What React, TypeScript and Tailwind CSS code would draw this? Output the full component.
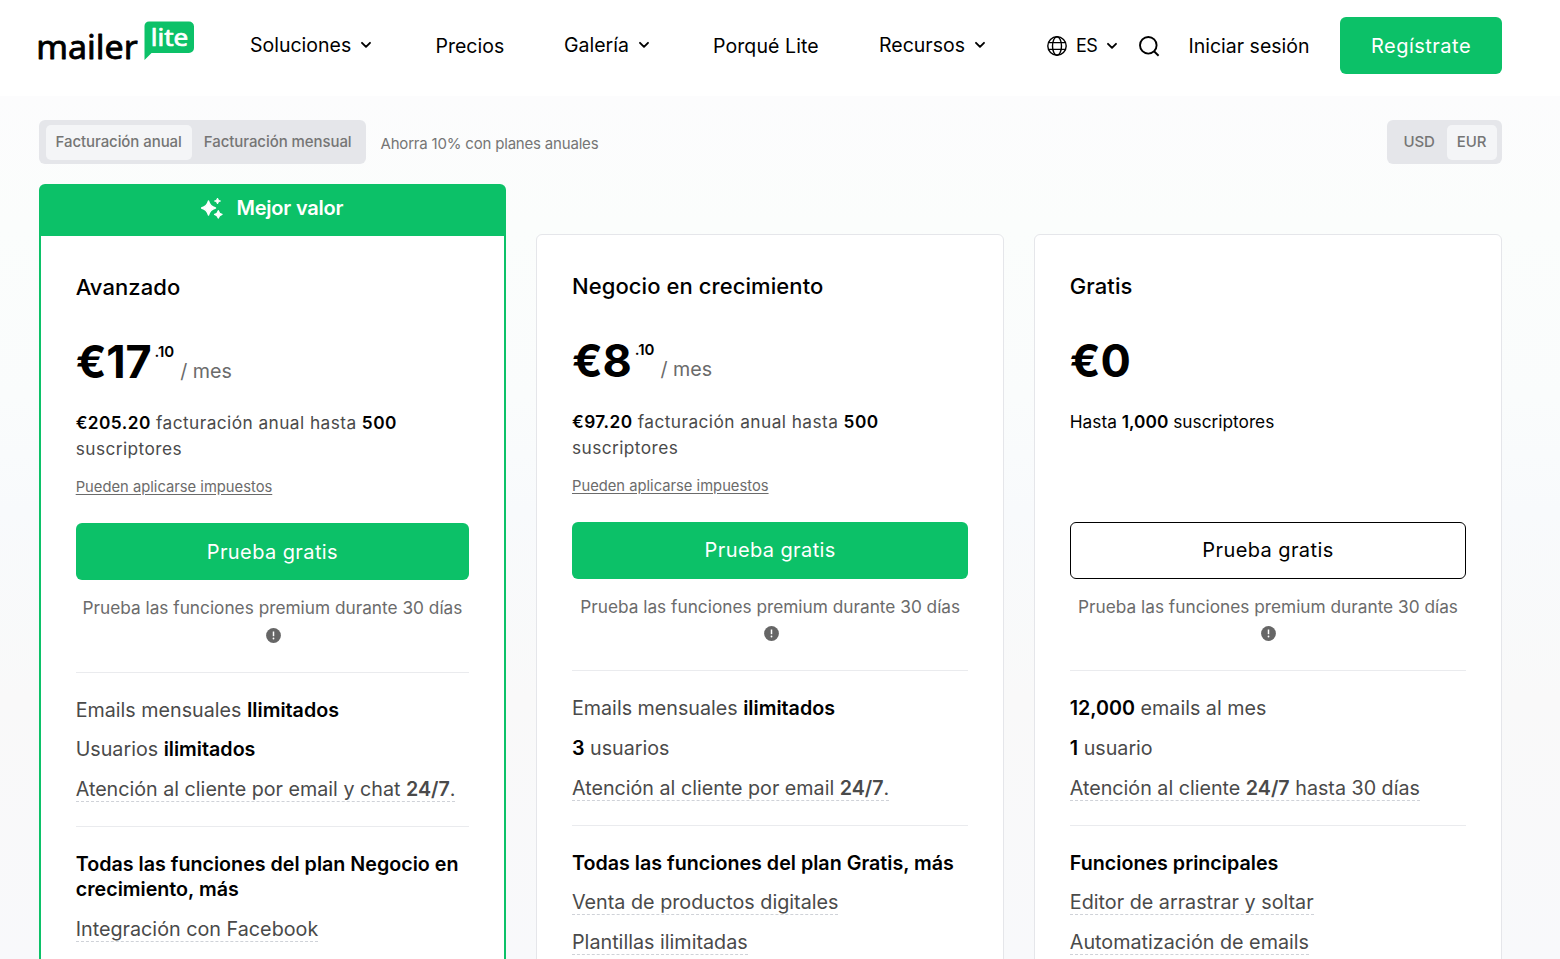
import type { ReactNode } from "react";
import clsx from "clsx";

function Logo() {
  return (
    <svg width="156" height="44" viewBox="0 0 156 44" className="block shrink-0 overflow-visible" role="img" aria-label="MailerLite">
      <path
        d="M111 0.500h40a5 5 0 0 1 5 5V27a5 5 0 0 1-5 5h-37.500L106.500 39V5a4.500 4.500 0 0 1 4.500-4.500z"
        fill="#0cc168"
      />
      <text
        x="-1.800"
        y="38.400"
        textLength="101.500"
        lengthAdjust="spacingAndGlyphs"
        fontFamily="'Noto Sans', sans-serif"
        fontSize="32"
        fontWeight="400"
        fill="#000"
        stroke="#000"
        strokeWidth="0.800"
        strokeLinejoin="round"
      >
        mailer
      </text>
      <text
        x="112.800"
        y="25"
        textLength="37.500"
        lengthAdjust="spacingAndGlyphs"
        fontFamily="'Noto Sans', sans-serif"
        fontSize="23"
        fontWeight="400"
        fill="#fff"
        stroke="#fff"
        strokeWidth="0.700"
        strokeLinejoin="round"
      >
        lite
      </text>
    </svg>
  );
}

function Chevron({ className }: { className?: string }) {
  return (
    <svg width="12" height="8" viewBox="0 0 12 8" fill="none" className={clsx("shrink-0", className)}>
      <path d="M2 1.800 6 5.800 10 1.800" stroke="#000" strokeWidth="1.900" strokeLinecap="round" strokeLinejoin="round" />
    </svg>
  );
}

function Globe() {
  return (
    <svg width="20" height="20" viewBox="0 0 20 20" fill="none" stroke="#000" strokeWidth="1.400" className="shrink-0">
      <circle cx="10" cy="10" r="9.200" />
      <ellipse cx="10" cy="10" rx="4.500" ry="9.200" />
      <path d="M1.800 6.600h16.400M1.800 13.400h16.400" />
    </svg>
  );
}

function Search() {
  return (
    <svg width="21" height="21" viewBox="0 0 21 21" fill="none" stroke="#000" strokeWidth="1.900" className="shrink-0">
      <circle cx="9.300" cy="9.300" r="8.300" />
      <path d="m15 15.200 4.600 4.500" />
    </svg>
  );
}

function Sparkles() {
  return (
    <svg width="22" height="22" viewBox="0 0 22 22" fill="#fff" stroke="#fff" strokeLinejoin="round" className="shrink-0">
      <path d="M7.500 4C8.600 8.300 10.200 9.900 14.500 11 10.200 12.100 8.600 13.700 7.500 18 6.400 13.700 4.800 12.100 0.500 11 4.800 9.900 6.400 8.300 7.500 4z" strokeWidth="1.400" />
      <path d="M16.500 1C17 2.900 17.600 3.500 19.500 4 17.600 4.500 17 5.100 16.500 7 16 5.100 15.400 4.500 13.500 4 15.400 3.500 16 2.900 16.500 1z" strokeWidth="1" />
      <path d="M17.300 13.600C17.900 16.100 18.600 16.800 21.100 17.400 18.600 18 17.900 18.700 17.300 21.200 16.700 18.700 16 18 13.500 17.400 16 16.800 16.700 16.100 17.300 13.600z" strokeWidth="1.200" />
    </svg>
  );
}

function InfoIcon() {
  return (
    <svg width="15" height="15" viewBox="0 0 15 15" className="shrink-0">
      <circle cx="7.500" cy="7.500" r="7.400" fill="#666" />
      <path d="M7.500 3.500v4.700" stroke="#fff" strokeWidth="1.500" />
      <circle cx="7.500" cy="10.500" r="0.900" fill="#fff" />
    </svg>
  );
}

function Header() {
  return (
    <header className="flex h-24 items-start bg-white pl-[38px] text-[19.5px] leading-6 text-black">
      <div className="w-[212px] pt-[21px]">
        <Logo />
      </div>
      <a className="flex w-[185.5px] items-center pt-[33px]">
        Soluciones
        <Chevron className="-mt-px ml-[9px]" />
      </a>
      <a className="w-[128.5px] pt-[34px]">Precios</a>
      <a className="flex w-[149px] items-center pt-[33px]">
        Galería
        <Chevron className="-mt-px ml-[9px]" />
      </a>
      <a className="w-[166px] pt-[34px] tracking-[0.1px]">Porqué Lite</a>
      <a className="flex w-[168px] items-center pt-[33px]">
        Recursos
        <Chevron className="-mt-px ml-[9px]" />
      </a>
      <div className="flex w-[92px] items-center pt-[34px] text-[18px]">
        <Globe />
        <span className="ml-[9px] tracking-[-0.5px]">ES</span>
        <Chevron className="ml-[9px]" />
      </div>
      <div className="w-[49.5px] pt-[36px]">
        <Search />
      </div>
      <a className="w-[151.500px] pt-[34px]">Iniciar sesión</a>
      <a className="mt-[17px] flex h-[57px] w-[162px] items-center justify-center rounded-md bg-[#0cc168] text-[20px] tracking-[0.5px] text-white">
        Regístrate
      </a>
    </header>
  );
}

function Toggle({ options, active, className }: { options: string[]; active: string; className?: string }) {
  return (
    <div className={clsx("flex h-11 items-center gap-[2px] rounded-md bg-[#e5e6ea]", className)}>
      {options.map((option) => (
        <button
          key={option}
          className={clsx(
            "h-[35px] rounded-[5px] px-[10px] pb-[2px] text-[15px] leading-[33px] font-medium tracking-[-0.07px] text-[#757575]",
            option === active && "bg-[#f4f5f7]",
          )}
        >
          {option}
        </button>
      ))}
    </div>
  );
}

function Row({ children, hint }: { children: ReactNode; hint?: boolean }) {
  return (
    <li className="h-[39.6px] leading-[26px]">
      <span className={clsx(hint && "border-b border-dashed border-[#cfd2d8]")}>{children}</span>
    </li>
  );
}

function B({ children }: { children: ReactNode }) {
  return <strong className="font-semibold text-black">{children}</strong>;
}

type Plan = {
  name: string;
  price: string;
  cents?: string;
  billing: ReactNode;
  taxes?: boolean;
  outline?: boolean;
  limits: ReactNode;
  heading: string;
  features: string[];
};

function PlanBody({ plan }: { plan: Plan }) {
  return (
    <>
      <h2 className="text-[22px] leading-8 font-medium tracking-[0.08px] text-black">{plan.name}</h2>
      <div className="mt-[30px] flex h-[58px] text-black">
        <span className="text-[45px] leading-[58px] font-bold tracking-[-0.2px]">{plan.price}</span>
        {plan.cents && (
          <>
            <span className="ml-[3px] pt-[8.5px] text-[15px] leading-5 font-semibold">{plan.cents}</span>
            <span className="ml-[6px] pt-[25.5px] text-[19.7px] leading-6 text-[#6b6b6b]">/ mes</span>
          </>
        )}
      </div>
      <div className="mt-[19px] h-[52px] text-[17.3px] leading-[26px] text-[#4a4a4a]">{plan.billing}</div>
      <div className="mt-[15.4px] h-5 text-[14.75px] leading-5 text-[#6b6b6b] underline underline-offset-2">
        {plan.taxes && "Pueden aplicarse impuestos"}
      </div>
      <button
        className={clsx(
          "mt-[26px] h-[57px] w-full rounded-md text-[20px] tracking-[0.4px]",
          plan.outline ? "border-[1.5px] border-black bg-white text-black" : "bg-[#0cc168] text-white",
        )}
      >
        Prueba gratis
      </button>
      <p className="mt-[15px] text-center text-[17.25px] leading-[26px] whitespace-nowrap text-[#6b6b6b]">
        Prueba las funciones premium durante 30 días
      </p>
      <div className="mt-[6.4px] flex justify-center pl-[2px]">
        <InfoIcon />
      </div>
      <hr className="mt-[29px] border-[#eaebee]" />
      <ul className="pt-6 text-[19.7px] text-[#4a4a4a]">{plan.limits}</ul>
      <hr className="mt-[10.5px] border-[#eaebee]" />
      <h3 className="mt-[25px] text-[19.7px] leading-[25px] font-semibold text-black">{plan.heading}</h3>
      <ul className="mt-[13.8px] text-[19.75px] text-[#4a4a4a]">
        {plan.features.map((feature) => (
          <Row key={feature} hint>
            {feature}
          </Row>
        ))}
      </ul>
    </>
  );
}

const advanced: Plan = {
  name: "Avanzado",
  price: "€17",
  cents: ".10",
  billing: (
    <p className="tracking-[0.43px]">
      <B>€205.20</B> facturación anual hasta <B>500</B> suscriptores
    </p>
  ),
  taxes: true,
  limits: (
    <>
      <Row>
        Emails mensuales <B>Ilimitados</B>
      </Row>
      <Row>
        Usuarios <B>ilimitados</B>
      </Row>
      <Row hint>
        Atención al cliente por email y chat <strong className="font-semibold">24/7</strong>.
      </Row>
    </>
  ),
  heading: "Todas las funciones del plan Negocio en crecimiento, más",
  features: ["Integración con Facebook"],
};

const growing: Plan = {
  name: "Negocio en crecimiento",
  price: "€8",
  cents: ".10",
  billing: (
    <p className="tracking-[0.43px]">
      <B>€97.20</B> facturación anual hasta <B>500</B> suscriptores
    </p>
  ),
  taxes: true,
  limits: (
    <>
      <Row>
        Emails mensuales <B>ilimitados</B>
      </Row>
      <Row>
        <B>3</B> usuarios
      </Row>
      <Row hint>
        Atención al cliente por email <strong className="font-semibold">24/7</strong>.
      </Row>
    </>
  ),
  heading: "Todas las funciones del plan Gratis, más",
  features: ["Venta de productos digitales", "Plantillas ilimitadas"],
};

const free: Plan = {
  name: "Gratis",
  price: "€0",
  billing: (
    <p className="text-black">
      Hasta <B>1,000</B> suscriptores
    </p>
  ),
  outline: true,
  limits: (
    <>
      <Row>
        <B>12,000</B> emails al mes
      </Row>
      <Row>
        <B>1</B> usuario
      </Row>
      <Row hint>
        Atención al cliente <strong className="font-semibold">24/7</strong> hasta 30 días
      </Row>
    </>
  ),
  heading: "Funciones principales",
  features: ["Editor de arrastrar y soltar", "Automatización de emails"],
};

export default function App() {
  return (
    <div className="h-[959px] w-[1560px] overflow-hidden bg-white font-['Inter',sans-serif]">
      <Header />
      <main className="h-[863px] bg-[linear-gradient(#fcfcfd,#fbfdfc_15%,#fafcfc_35%,#f8fafc_48%,#f9f9f9_70%,#f8f9fb)] px-[38.5px] pt-6">
        <div className="flex w-[1463px] items-center">
          <Toggle options={["Facturación anual", "Facturación mensual"]} active="Facturación anual" className="w-[327px] pl-[7px]" />
          <span className="mt-1 ml-[15px] text-[15px] tracking-[-0.19px] text-[#757575]">Ahorra 10% con planes anuales</span>
          <Toggle options={["USD", "EUR"]} active="EUR" className="ml-auto w-[115px] justify-end pr-[5px]" />
        </div>
        <div className="mt-5 flex w-[1464px] items-start gap-[30px]">
          <section className="h-[820px] w-[467.8px] shrink-0 rounded-t-md bg-[#0cc168] px-[2.5px]">
            <div className="flex h-[52px] items-center justify-center gap-[13px] pb-1 text-[20px] font-semibold tracking-[-0.2px] text-white">
              <Sparkles />
              Mejor valor
            </div>
            <div className="h-[768px] bg-white px-[34.7px] pt-[35px]">
              <PlanBody plan={advanced} />
            </div>
          </section>
          {[growing, free].map((plan) => (
            <section key={plan.name} className="mt-[49.6px] h-[770px] w-[467.8px] shrink-0 rounded-md border border-[#e5e6ea] bg-white px-[34.7px] pt-[35px]">
              <PlanBody plan={plan} />
            </section>
          ))}
        </div>
      </main>
    </div>
  );
}
